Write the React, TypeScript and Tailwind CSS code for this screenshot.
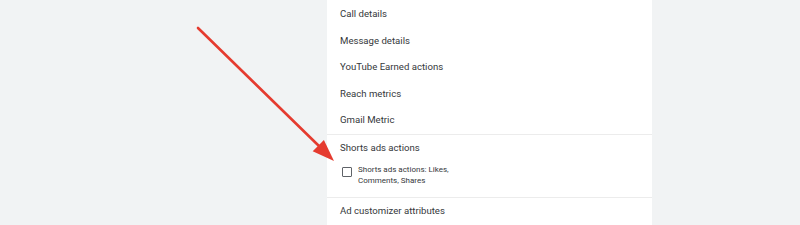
const ROWS = ['Call details', 'Message details', 'YouTube Earned actions', 'Reach metrics', 'Gmail Metric'];

function Row({ label }: { label: string }) {
  return (
    <div className="flex h-[26.5px] items-center px-[13px] text-[9.6px] text-[#35383b]">
      {label}
    </div>
  );
}

export default function App() {
  return (
    <div
      className="relative flex h-[225px] w-[800px] overflow-hidden bg-[#f1f3f4]"
      style={{ fontFamily: 'Roboto, "Noto Sans", sans-serif' }}
    >
      <div className="w-[327px] shrink-0" />

      {/* Column list panel */}
      <div className="flex w-[325px] shrink-0 flex-col bg-white pt-[1px]">
        {ROWS.map((r) => (
          <Row key={r} label={r} />
        ))}

        <div className="border-t border-[#ececec] px-[13px] pb-[11.5px] pt-[6px]">
          <div className="h-[13px] text-[9.6px] leading-[13px] text-[#35383b]">Shorts ads actions</div>
          <label className="mt-[10px] flex items-start gap-[6px] pl-[1px]">
            <span className="mt-[2.5px] flex h-[11px] w-[11px] items-center justify-center">
              <span className="h-[10px] w-[10px] rounded-[1px] border-[1.5px] border-[#5f6368]" />
            </span>
            <span className="text-[8px] leading-[11px] text-[#35383b]">
              Shorts ads actions: Likes,
              <br />
              Comments, Shares
            </span>
          </label>
        </div>

        <div className="border-t border-[#ececec]">
          <Row label="Ad customizer attributes" />
        </div>
      </div>

      {/* Annotation arrow */}
      <svg className="pointer-events-none absolute left-0 top-0" width="800" height="225" viewBox="0 0 800 225">
        <line x1="198" y1="28" x2="320" y2="147" stroke="#e53b2f" strokeWidth="2.6" strokeLinecap="round" />
        <polygon points="334,161 312.7,151.3 323.9,139.9" fill="#e53b2f" />
      </svg>
    </div>
  );
}
